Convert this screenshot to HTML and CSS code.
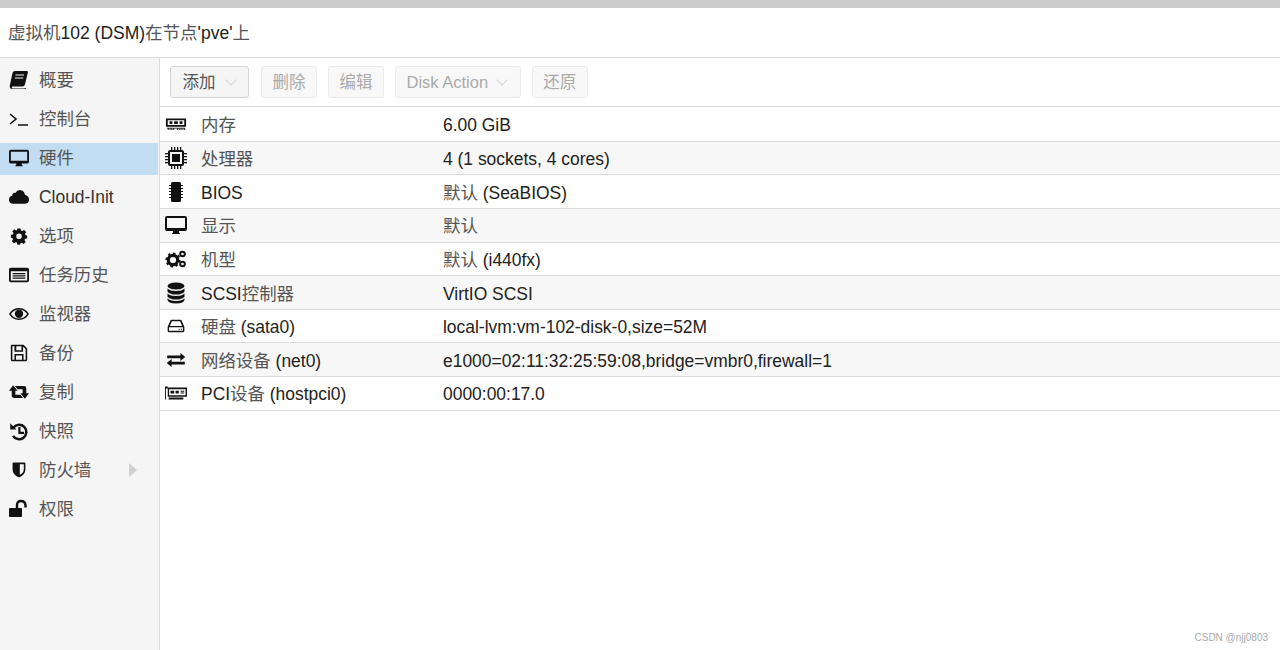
FILE: index.html
```html
<!DOCTYPE html>
<html lang="zh-CN">
<head>
  <meta charset="UTF-8" />
  <title>虚拟机102 (DSM)</title>
  <link rel="stylesheet" href="styles.css">
</head>
<body>

  <svg class="defs" width="0" height="0">
    <symbol id="i-book" viewBox="0 0 20 20"><path d="M6 1h12q1.300 0 .9 1.500l-3 12q-.4 2-2.400 2H4q-1.500 0-1.300 1t1.300 1h11q1 0 1.500-.8l.5 1.300H3.500Q.3 19 .8 15.500L3.500 3Q4 1 6 1z"/><path d="M6.500 5h8.500M5.800 8h8.500" stroke="#f5f5f5" stroke-width="1.200"/></symbol>
    <symbol id="i-terminal" viewBox="0 0 20 20"><path d="M1 5l6 5-6 5M9 16h10" fill="none" stroke="currentColor" stroke-width="1.600"/></symbol>
    <symbol id="i-desktop" viewBox="0 0 22 20"><path fill-rule="evenodd" d="M2 1h18q2 0 2 2v11q0 2-2 2h-6v1.500l1.500 1.500h-9L8 17.500V16H2q-2 0-2-2V3q0-2 2-2zm0 2v10h18V3z"/></symbol>
    <symbol id="i-cloud" viewBox="0 0 22 18"><path d="M5 16.500q-5 0-5-4.500 0-3.500 3.500-4.300Q3.700 4 7 4.500 9 1 13 1.500q4 .7 4.500 5Q22 7.500 22 12t-5 4.500z"/></symbol>
    <symbol id="i-gear" viewBox="-2.500 -3 25 25"><path fill-rule="evenodd" d="M8 1h4l.5 2.700 1.600.7L16.400 3 19 5.600l-1.500 2.200.7 1.700 2 .5v3.500l-2.600.5-.7 1.600 1.500 2.300-2.700 2.600-2.200-1.500-1.700.7-.4 1.800H8l-.5-2.500-1.600-.7L3.700 19.600 1 17l1.500-2.200-.7-1.700L-.1 12.600V9l2.500-.4.7-1.700L1.600 4.600 4.300 2l2.200 1.500 1.100-.5zM10 7.300a3.500 3.500 0 100 7 3.500 3.500 0 000-7z" transform="translate(0 -1)"/></symbol>
    <symbol id="i-list" viewBox="0 0 22 20"><path fill-rule="evenodd" d="M2 2h18q2 0 2 2v12q0 2-2 2H2q-2 0-2-2V4q0-2 2-2zm0 4v10h18V6z"/><path d="M4 8.500h14M4 11h14M4 13.500h14" stroke="currentColor" stroke-width="1.300"/></symbol>
    <symbol id="i-eye" viewBox="0 0 22 20"><path fill-rule="evenodd" d="M11 3.500q7 0 11 6.500-4 6.500-11 6.500T0 10q4-6.500 11-6.500zM11 5q-5.500 0-9 5 3.500 5 9 5t9-5q-3.500-5-9-5z"/><circle cx="11" cy="9.700" r="4.600"/></symbol>
    <symbol id="i-save" viewBox="-1 -1 22 22"><path fill-rule="evenodd" d="M2 1h13l4 4v12.500q0 1.500-1.500 1.500h-15Q1 19 1 17.500v-15Q1 1 2 1zm3 1.700H2.700v14.600H5V11h10v6.300h2.300V5.700L14.500 3v5.500h-9.500zm2 0V7h5.700V2.700zM6.700 12.700v4.600h6.600v-4.600z"/></symbol>
    <symbol id="i-retweet" viewBox="0 0 22 20"><path d="M4.500 2.500L9.500 8.500H7V13H12.500L15.500 16.500H5.500Q3 16.500 3 14.500V8.500H0z"/><path d="M17.500 17.500L12.500 11.500H15V7H9.500L6.500 3.500H16.500Q19 3.500 19 5.500V11.500H22z"/></symbol>
    <symbol id="i-history" viewBox="0 0 20 20"><path d="M4.500 6.500A7.200 7.200 0 1 1 4 14.800" fill="none" stroke="currentColor" stroke-width="2.500"/><path d="M1.200 2.300l6.300 6.200H1.200zM9.300 6h2.200v4.800H15V13H9.300z"/></symbol>
    <symbol id="i-shield" viewBox="-2.500 -1.500 25 24"><path fill-rule="evenodd" d="M3 1h14q1 0 1 1v8q0 6.500-8 10-8-3.500-8-10V2q0-1 1-1zm8 2.200v13.500q5-2.800 5-6.700V3.200z"/></symbol>
    <symbol id="i-unlock" viewBox="0 0 20 20"><rect x="0" y="9" width="13" height="9" rx="1"/><path d="M8 9.500V6q0-4 4-4t4.500 4v2.500" fill="none" stroke="currentColor" stroke-width="2.400"/></symbol>
    <symbol id="i-memory" viewBox="0 0 24 16"><path fill-rule="evenodd" d="M1 2h22v9H1zm2 2v5h18V4z"/><path d="M5 5h3v3H5zM10 5h4v3h-4zM16 5h3v3h-3zM2 12h20v2.500h-1V13h-1v1.500h-1V13h-1v1.500h-1V13h-1v1.500h-1V13h-1v1.500h-1V13H10v1.500H9V13H8v1.500H7V13H6v1.500H5V13H4v1.500H3V13H2z"/></symbol>
    <symbol id="i-cpu" viewBox="0 0 22 22"><path fill-rule="evenodd" d="M5 3h12q2 0 2 2v12q0 2-2 2H5q-2 0-2-2V5q0-2 2-2zm0 2v12h12V5z"/><path d="M7 7h8v8H7zM6 0h1.300v3H6zM9 0h1.300v3H9zM12 0h1.300v3H12zM15 0h1.300v3H15zM6 19h1.300v3H6zM9 19h1.300v3H9zM12 19h1.300v3H12zM15 19h1.300v3H15zM0 6h3v1.300H0zM0 9h3v1.300H0zM0 12h3v1.300H0zM0 15h3v1.300H0zM19 6h3v1.300h-3zM19 9h3v1.300h-3zM19 12h3v1.300h-3zM19 15h3v1.300h-3z"/></symbol>
    <symbol id="i-chip" viewBox="0 0 20 22"><rect x="5" y="1" width="10" height="20" rx="1.500"/><path d="M3 4h2v1H3zM3 7h2v1H3zM3 10h2v1H3zM3 13h2v1H3zM3 16h2v1H3zM15 4h2v1h-2zM15 7h2v1h-2zM15 10h2v1h-2zM15 13h2v1h-2zM15 16h2v1h-2z"/></symbol>
    <symbol id="i-cogs" viewBox="0 0 22 20"><circle cx="8" cy="11" r="4.700" fill="none" stroke="currentColor" stroke-width="3.200"/><circle cx="8" cy="11" r="6.800" fill="none" stroke="currentColor" stroke-width="1.600" stroke-dasharray="2.600 2.700"/><circle cx="17.500" cy="5" r="2.300" fill="none" stroke="currentColor" stroke-width="2"/><circle cx="17.500" cy="15" r="2.300" fill="none" stroke="currentColor" stroke-width="2"/></symbol>
    <symbol id="i-database" viewBox="0 0 18 22"><ellipse cx="9" cy="4" rx="8.500" ry="3.500"/><path d="M.5 6.500Q3 9 9 9t8.500-2.500v3.200Q15 12.500 9 12.500T.5 9.700zM.5 11.500Q3 14 9 14t8.500-2.500v3.200Q15 17.500 9 17.500T.5 14.700zM.5 16.300Q3 19 9 19t8.500-2.700V18q-1 3.500-8.500 3.500T.5 18z"/></symbol>
    <symbol id="i-hdd" viewBox="-2.500 -3 25 24"><path fill-rule="evenodd" d="M5 2h10q1 0 1.500 1l3 7v4.500q0 1.500-1.500 1.500H2q-1.500 0-1.500-1.500V10l3-7Q4 2 5 2zm.300 1.500L3 9h14l-2.300-5.500zM2 10.500v4h16v-4z"/><path d="M13 12h1.300v1.300H13zM15.500 12h1.300v1.300h-1.300z"/></symbol>
    <symbol id="i-exchange" viewBox="-1.500 -3 25 24"><path d="M16 1l5.500 4.500L16 10V7H1V4h15zM6 8v3h15v3H6v3L.5 12.500z"/></symbol>
    <symbol id="i-pci" viewBox="0 0 24 16"><path fill-rule="evenodd" d="M0 1h3v1h21v10H3v-9H1v12H0zm4.500 3v6.500h18V4z"/><path d="M6 5.500h4v3H6zM11.500 5.500H15v3h-3.500zM17 5.500h4v1.200h-4zM17 7.500h4v1h-4zM4 13h16v2H4z"/></symbol>
  </svg>

  <div class="topstrip"></div>
  <header class="title"><span class="zh">虚拟机</span>102 (DSM)<span class="zh">在节点</span>'pve'<span class="zh">上</span></header>

  <div class="main">
    <nav class="sidebar">
      <a class="nav-item"><svg class="nav-icon"><use href="#i-book"/></svg><span class="zh">概要</span></a>
      <a class="nav-item"><svg class="nav-icon"><use href="#i-terminal"/></svg><span class="zh">控制台</span></a>
      <a class="nav-item selected"><svg class="nav-icon"><use href="#i-desktop"/></svg><span class="zh">硬件</span></a>
      <a class="nav-item"><svg class="nav-icon"><use href="#i-cloud"/></svg>Cloud-Init</a>
      <a class="nav-item"><svg class="nav-icon"><use href="#i-gear"/></svg><span class="zh">选项</span></a>
      <a class="nav-item"><svg class="nav-icon"><use href="#i-list"/></svg><span class="zh">任务历史</span></a>
      <a class="nav-item"><svg class="nav-icon"><use href="#i-eye"/></svg><span class="zh">监视器</span></a>
      <a class="nav-item"><svg class="nav-icon"><use href="#i-save"/></svg><span class="zh">备份</span></a>
      <a class="nav-item"><svg class="nav-icon"><use href="#i-retweet"/></svg><span class="zh">复制</span></a>
      <a class="nav-item"><svg class="nav-icon"><use href="#i-history"/></svg><span class="zh">快照</span></a>
      <a class="nav-item"><svg class="nav-icon"><use href="#i-shield"/></svg><span class="zh">防火墙</span><span class="arrow"></span></a>
      <a class="nav-item"><svg class="nav-icon"><use href="#i-unlock"/></svg><span class="zh">权限</span></a>
    </nav>

    <section class="content">
      <div class="toolbar">
        <button class="btn active">添加<span class="caret"></span></button>
        <button class="btn">删除</button>
        <button class="btn">编辑</button>
        <button class="btn">Disk Action<span class="caret"></span></button>
        <button class="btn">还原</button>
      </div>

      <div class="rows">
        <div class="row"><svg class="row-icon"><use href="#i-memory"/></svg><span><span class="zh">内存</span></span><span>6.00 GiB</span></div>
        <div class="row"><svg class="row-icon"><use href="#i-cpu"/></svg><span><span class="zh">处理器</span></span><span>4 (1 sockets, 4 cores)</span></div>
        <div class="row"><svg class="row-icon"><use href="#i-chip"/></svg><span>BIOS</span><span><span class="zh">默认</span> (SeaBIOS)</span></div>
        <div class="row"><svg class="row-icon"><use href="#i-desktop"/></svg><span><span class="zh">显示</span></span><span><span class="zh">默认</span></span></div>
        <div class="row"><svg class="row-icon"><use href="#i-cogs"/></svg><span><span class="zh">机型</span></span><span><span class="zh">默认</span> (i440fx)</span></div>
        <div class="row"><svg class="row-icon"><use href="#i-database"/></svg><span>SCSI<span class="zh">控制器</span></span><span>VirtIO SCSI</span></div>
        <div class="row"><svg class="row-icon"><use href="#i-hdd"/></svg><span><span class="zh">硬盘</span> (sata0)</span><span>local-lvm:vm-102-disk-0,size=52M</span></div>
        <div class="row"><svg class="row-icon"><use href="#i-exchange"/></svg><span><span class="zh">网络设备</span> (net0)</span><span>e1000=02:11:32:25:59:08,bridge=vmbr0,firewall=1</span></div>
        <div class="row"><svg class="row-icon"><use href="#i-pci"/></svg><span>PCI<span class="zh">设备</span> (hostpci0)</span><span>0000:00:17.0</span></div>
      </div>
    </section>
  </div>

  <div class="watermark">CSDN @njj0803</div>

</body>
</html>
```

FILE: styles.css
```css
* {
  box-sizing: border-box;
  margin: 0;
  padding: 0;
}

body {
  font-family: "Liberation Sans", "Noto Sans CJK SC", sans-serif;
  font-size: 17.45px;
  line-height: 20px;
  color: #222;
  background: #fff;
  height: 650px;
  overflow: hidden;
  display: flex;
  flex-direction: column;
  position: relative;
}

.defs {
  position: absolute;
}

.zh {
  color: #555;
}

.topstrip {
  height: 8px;
  background: #cdcdcd;
}

.title {
  height: 50px;
  padding-left: 8px;
  display: flex;
  align-items: center;
  font-size: 17.5px;
  border-bottom: 1px solid #d9d9d9;
}

.main {
  flex: 1;
  display: flex;
}

.sidebar {
  width: 160px;
  background: #f5f5f5;
  border-right: 1px solid #d9d9d9;
  padding-top: 6.5px;
  display: flex;
  flex-direction: column;
  gap: 7px;
}

.nav-item {
  height: 32px;
  margin-right: 1px;
  padding-bottom: 2px;
  display: flex;
  align-items: center;
  color: #333;
  position: relative;
}

.nav-item.selected {
  background: #c2ddf2;
}

.nav-icon {
  width: 20px;
  height: 20px;
  margin: 0 10px 0 9px;
  fill: #111;
  color: #111;
  flex: none;
}

.arrow {
  position: absolute;
  left: 129px;
  top: 8px;
  border-left: 8px solid #d0d0d0;
  border-top: 7px solid transparent;
  border-bottom: 7px solid transparent;
}

.content {
  flex: 1;
  display: flex;
  flex-direction: column;
}

.toolbar {
  height: 49px;
  padding: 8px 10px;
  display: flex;
  gap: 11px;
  border-bottom: 1px solid #d9d9d9;
}

.btn {
  height: 32px;
  padding: 0 10.5px;
  font: inherit;
  font-size: 16.5px;
  color: #aaa;
  background: #f8f8f8;
  border: 1px solid #ebebeb;
  border-radius: 3px;
  display: flex;
  align-items: center;
}

.btn.active {
  padding-left: 11.5px;
  margin-right: 1px;
  color: #555;
  background: #f5f5f5;
  border-color: #d4d4d4;
}

.caret {
  width: 8px;
  height: 8px;
  margin: -4px 3px 0 10px;
  border-right: 1.5px solid #d5d5d5;
  border-bottom: 1.5px solid #d5d5d5;
  transform: rotate(45deg);
}

.btn.active .caret {
  margin-left: 11px;
}

.rows {
  padding-top: 1px;
}

.row {
  height: 33.65px;
  display: grid;
  grid-template-columns: 41px 242px 1fr;
  align-items: center;
  border-bottom: 1px solid #dcdcdc;
}

.row > span {
  padding-top: 2px;
}

.row:nth-child(even) {
  background: #f7f7f7;
}

.row-icon {
  width: 22px;
  height: 22px;
  margin-left: 5px;
  fill: #111;
  color: #111;
}

.watermark {
  position: absolute;
  right: 12px;
  bottom: 6px;
  font-size: 10px;
  line-height: 12px;
  color: #aaa;
}
```
